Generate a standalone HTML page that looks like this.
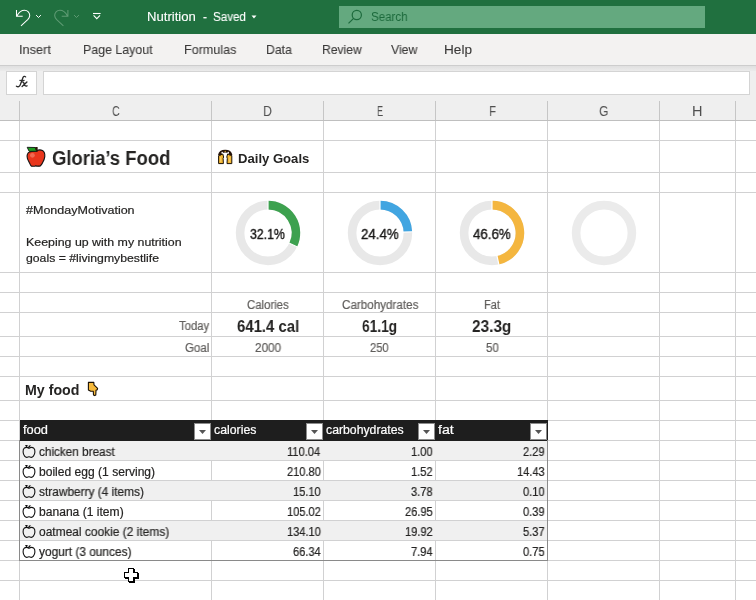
<!DOCTYPE html>
<html><head><meta charset="utf-8"><style>
html,body{margin:0;padding:0;width:756px;height:600px;overflow:hidden;background:#fff;}
body{position:relative;font-family:"Liberation Sans", sans-serif;}
</style></head><body>
<div style="position:absolute;left:0px;top:0px;width:756px;height:34px;background:#20703f;"></div><div style="position:absolute;left:0px;top:34px;width:756px;height:32px;background:#f3f2f1;"></div><div style="position:absolute;left:0px;top:65px;width:756px;height:1px;background:#cdcdcd;"></div><div style="position:absolute;left:0px;top:66px;width:756px;height:35px;background:#efefef;"></div><div style="position:absolute;left:0px;top:66px;width:756px;height:5px;background:#e6e6e6;background:linear-gradient(#e0e0e0,#ebebeb);"></div><div style="position:absolute;left:6px;top:71px;width:31px;height:24px;background:#ffffff;box-sizing:border-box;border:1px solid #d4d4d4;"></div><div style="position:absolute;left:43px;top:71px;width:707px;height:24px;background:#ffffff;box-sizing:border-box;border:1px solid #d4d4d4;"></div><div style="position:absolute;left:0px;top:101px;width:756px;height:19px;background:#efefef;"></div><div style="position:absolute;left:0px;top:120px;width:756px;height:1px;background:#bfbfbf;"></div><div style="position:absolute;left:19px;top:101px;width:1px;height:19px;background:#c6c6c6;"></div><div style="position:absolute;left:211px;top:101px;width:1px;height:19px;background:#c6c6c6;"></div><div style="position:absolute;left:323px;top:101px;width:1px;height:19px;background:#c6c6c6;"></div><div style="position:absolute;left:435px;top:101px;width:1px;height:19px;background:#c6c6c6;"></div><div style="position:absolute;left:547px;top:101px;width:1px;height:19px;background:#c6c6c6;"></div><div style="position:absolute;left:659px;top:101px;width:1px;height:19px;background:#c6c6c6;"></div><div style="position:absolute;left:735px;top:101px;width:1px;height:19px;background:#c6c6c6;"></div><div style="position:absolute;left:0px;top:121px;width:756px;height:479px;background:#ffffff;"></div><div style="position:absolute;left:0px;top:140px;width:756px;height:1px;background:#d1d1d2;"></div><div style="position:absolute;left:0px;top:172px;width:756px;height:1px;background:#d1d1d2;"></div><div style="position:absolute;left:0px;top:192px;width:756px;height:1px;background:#d1d1d2;"></div><div style="position:absolute;left:0px;top:272px;width:756px;height:1px;background:#d1d1d2;"></div><div style="position:absolute;left:0px;top:292px;width:756px;height:1px;background:#d1d1d2;"></div><div style="position:absolute;left:0px;top:312px;width:756px;height:1px;background:#d1d1d2;"></div><div style="position:absolute;left:0px;top:336px;width:756px;height:1px;background:#d1d1d2;"></div><div style="position:absolute;left:0px;top:356px;width:756px;height:1px;background:#d1d1d2;"></div><div style="position:absolute;left:0px;top:376px;width:756px;height:1px;background:#d1d1d2;"></div><div style="position:absolute;left:0px;top:400px;width:756px;height:1px;background:#d1d1d2;"></div><div style="position:absolute;left:0px;top:420px;width:756px;height:1px;background:#d1d1d2;"></div><div style="position:absolute;left:0px;top:440px;width:756px;height:1px;background:#d1d1d2;"></div><div style="position:absolute;left:0px;top:460px;width:756px;height:1px;background:#d1d1d2;"></div><div style="position:absolute;left:0px;top:480px;width:756px;height:1px;background:#d1d1d2;"></div><div style="position:absolute;left:0px;top:500px;width:756px;height:1px;background:#d1d1d2;"></div><div style="position:absolute;left:0px;top:520px;width:756px;height:1px;background:#d1d1d2;"></div><div style="position:absolute;left:0px;top:540px;width:756px;height:1px;background:#d1d1d2;"></div><div style="position:absolute;left:0px;top:560px;width:756px;height:1px;background:#d1d1d2;"></div><div style="position:absolute;left:0px;top:580px;width:756px;height:1px;background:#d1d1d2;"></div><div style="position:absolute;left:19px;top:121px;width:1px;height:479px;background:#d1d1d2;"></div><div style="position:absolute;left:211px;top:121px;width:1px;height:479px;background:#d1d1d2;"></div><div style="position:absolute;left:323px;top:121px;width:1px;height:479px;background:#d1d1d2;"></div><div style="position:absolute;left:435px;top:121px;width:1px;height:479px;background:#d1d1d2;"></div><div style="position:absolute;left:547px;top:121px;width:1px;height:479px;background:#d1d1d2;"></div><div style="position:absolute;left:659px;top:121px;width:1px;height:479px;background:#d1d1d2;"></div><div style="position:absolute;left:735px;top:121px;width:1px;height:479px;background:#d1d1d2;"></div><div style="position:absolute;left:20px;top:441px;width:527px;height:19px;background:#f0f0f0;"></div><div style="position:absolute;left:20px;top:481px;width:527px;height:19px;background:#f0f0f0;"></div><div style="position:absolute;left:20px;top:521px;width:527px;height:19px;background:#f0f0f0;"></div><div style="position:absolute;left:20px;top:420px;width:528px;height:21px;background:#1e1e1e;"></div><div style="position:absolute;left:19px;top:440px;width:1px;height:121px;background:#8a8a8a;"></div><div style="position:absolute;left:547px;top:440px;width:1px;height:121px;background:#8a8a8a;"></div><div style="position:absolute;left:19px;top:560px;width:529px;height:1px;background:#8a8a8a;"></div><div style="position:absolute;left:194px;top:423px;width:17px;height:17px;background:#ffffff;box-sizing:border-box;border:1px solid #8c8c8c;"></div><svg style="position:absolute;left:194px;top:423px" width="17" height="17"><polygon points="5,7 12,7 8.5,11" fill="#555"/></svg><div style="position:absolute;left:306px;top:423px;width:17px;height:17px;background:#ffffff;box-sizing:border-box;border:1px solid #8c8c8c;"></div><svg style="position:absolute;left:306px;top:423px" width="17" height="17"><polygon points="5,7 12,7 8.5,11" fill="#555"/></svg><div style="position:absolute;left:418px;top:423px;width:17px;height:17px;background:#ffffff;box-sizing:border-box;border:1px solid #8c8c8c;"></div><svg style="position:absolute;left:418px;top:423px" width="17" height="17"><polygon points="5,7 12,7 8.5,11" fill="#555"/></svg><div style="position:absolute;left:530px;top:423px;width:17px;height:17px;background:#ffffff;box-sizing:border-box;border:1px solid #8c8c8c;"></div><svg style="position:absolute;left:530px;top:423px" width="17" height="17"><polygon points="5,7 12,7 8.5,11" fill="#555"/></svg><svg style="position:absolute;left:250px;top:14px" width="8" height="6"><polygon points="1.5,1.5 6.5,1.5 4,4.5" fill="#ffffff"/></svg><div style="position:absolute;left:339px;top:6px;width:366px;height:22px;background:#64a97f;"></div><svg style="position:absolute;left:344px;top:6px" width="24" height="22"><circle cx="12.8" cy="9" r="4.6" fill="none" stroke="#1c6a3c" stroke-width="1.2"/><line x1="9.6" y1="12.3" x2="4.5" y2="17.4" stroke="#1c6a3c" stroke-width="1.2"/></svg><svg style="position:absolute;left:0px;top:0px" width="110" height="34"><path d="M16.5 10 V16.3 H22.7 M16.9 15.9 C19 12.2 21.9 10.3 24.5 10.3 C27.6 10.3 29.8 12.6 29.7 15.6 C29.6 17.2 28.9 18.4 27.7 19.6 L21 25.8" fill="none" stroke="#fff" stroke-width="1.05"/><path d="M36.1 15.1 L38.5 17.5 L40.9 15.1" fill="none" stroke="#fff" stroke-width="1"/><g transform="translate(84.4,0) scale(-1,1)"><path d="M16.5 10 V16.3 H22.7 M16.9 15.9 C19 12.2 21.9 10.3 24.5 10.3 C27.6 10.3 29.8 12.6 29.7 15.6 C29.6 17.2 28.9 18.4 27.7 19.6 L21 25.8" fill="none" stroke="#5f9b74" stroke-width="1.05"/></g><path d="M74.1 15.1 L76.5 17.5 L78.9 15.1" fill="none" stroke="#5f9b74" stroke-width="1"/><path d="M93 13.5 H100.6" stroke="#fff" stroke-width="1.1"/><path d="M93.6 15.4 L96.8 18.6 L100 15.4" fill="none" stroke="#fff" stroke-width="1.1"/></svg><svg style="position:absolute;left:0;top:55px" width="40" height="40" viewBox="0 0 40 40"><path d="M25.6 21.9 C24.8 21 23.4 21.3 23 22.6 L20.2 30 C19.5 31.8 18 32.2 16.4 31.2" fill="none" stroke="#2b2b2b" stroke-width="1.3" stroke-linecap="round"/><path d="M19.4 25.4 H24.6" stroke="#2b2b2b" stroke-width="1.1"/><path d="M21.8 27 C23 26.5 23.6 27.2 24.2 28.9 C24.8 30.7 25.5 31.6 27 30.8 M26.9 26.9 L22.1 31.5" fill="none" stroke="#2b2b2b" stroke-width="1.35" stroke-linecap="round"/></svg><svg style="position:absolute;left:232px;top:196.7px" width="72" height="72" viewBox="232 196.7 72 72"><circle cx="268" cy="232.7" r="27.900000000000002" fill="none" stroke="#e8e8e8" stroke-width="8.600000000000001"/><path d="M268.00 204.80 A27.900000000000002 27.900000000000002 0 0 1 293.17 244.74" fill="none" stroke="#3da14f" stroke-width="8.600000000000001"/><line x1="268.00" y1="210.10" x2="268.00" y2="199.50" stroke="#fff" stroke-width="1.2"/><line x1="288.39" y1="242.45" x2="297.95" y2="247.02" stroke="#fff" stroke-width="1.2"/></svg><svg style="position:absolute;left:344px;top:196.7px" width="72" height="72" viewBox="344 196.7 72 72"><circle cx="380" cy="232.7" r="27.900000000000002" fill="none" stroke="#e8e8e8" stroke-width="8.600000000000001"/><path d="M380.00 204.80 A27.900000000000002 27.900000000000002 0 0 1 407.88 231.65" fill="none" stroke="#41a5e1" stroke-width="8.600000000000001"/><line x1="380.00" y1="210.10" x2="380.00" y2="199.50" stroke="#fff" stroke-width="1.2"/><line x1="402.58" y1="231.85" x2="413.18" y2="231.45" stroke="#fff" stroke-width="1.2"/></svg><svg style="position:absolute;left:456px;top:196.7px" width="72" height="72" viewBox="456 196.7 72 72"><circle cx="492" cy="232.7" r="27.900000000000002" fill="none" stroke="#e8e8e8" stroke-width="8.600000000000001"/><path d="M492.00 204.80 A27.900000000000002 27.900000000000002 0 0 1 497.91 259.97" fill="none" stroke="#f4b63f" stroke-width="8.600000000000001"/><line x1="492.00" y1="210.10" x2="492.00" y2="199.50" stroke="#fff" stroke-width="1.2"/><line x1="496.79" y1="254.79" x2="499.04" y2="265.15" stroke="#fff" stroke-width="1.2"/></svg><svg style="position:absolute;left:568px;top:196.7px" width="72" height="72" viewBox="568 196.7 72 72"><circle cx="604" cy="232.7" r="27.900000000000002" fill="none" stroke="#ebebeb" stroke-width="8.600000000000001"/></svg><svg style="position:absolute;left:20px;top:442px" width="18" height="18" viewBox="0 0 18 18"><path d="M9 6.3 C10.2 5.5 12.2 5.2 13.6 6 C14.7 6.7 15 8.2 14.9 10 C14.8 11.7 14.3 13 13.4 14.1 C12.6 15.1 11.6 15.5 10.8 15.3 C10.1 15.1 9.6 14.7 9 14.7 C8.4 14.7 7.9 15.1 7.2 15.3 C6.4 15.5 5.4 15.1 4.6 14.1 C3.7 13 3.2 11.7 3.1 10 C3 8.2 3.3 6.7 4.4 6 C5.8 5.2 7.8 5.5 9 6.3 Z" fill="none" stroke="#111" stroke-width="1.1"/><path d="M5.3 3.6 H7.6 M6.6 3.6 V6 M8.3 5.8 L10.4 3.4 M8.7 3.9 L9.5 4.9" fill="none" stroke="#111" stroke-width="1.05"/></svg><svg style="position:absolute;left:20px;top:462px" width="18" height="18" viewBox="0 0 18 18"><path d="M9 6.3 C10.2 5.5 12.2 5.2 13.6 6 C14.7 6.7 15 8.2 14.9 10 C14.8 11.7 14.3 13 13.4 14.1 C12.6 15.1 11.6 15.5 10.8 15.3 C10.1 15.1 9.6 14.7 9 14.7 C8.4 14.7 7.9 15.1 7.2 15.3 C6.4 15.5 5.4 15.1 4.6 14.1 C3.7 13 3.2 11.7 3.1 10 C3 8.2 3.3 6.7 4.4 6 C5.8 5.2 7.8 5.5 9 6.3 Z" fill="none" stroke="#111" stroke-width="1.1"/><path d="M5.3 3.6 H7.6 M6.6 3.6 V6 M8.3 5.8 L10.4 3.4 M8.7 3.9 L9.5 4.9" fill="none" stroke="#111" stroke-width="1.05"/></svg><svg style="position:absolute;left:20px;top:482px" width="18" height="18" viewBox="0 0 18 18"><path d="M9 6.3 C10.2 5.5 12.2 5.2 13.6 6 C14.7 6.7 15 8.2 14.9 10 C14.8 11.7 14.3 13 13.4 14.1 C12.6 15.1 11.6 15.5 10.8 15.3 C10.1 15.1 9.6 14.7 9 14.7 C8.4 14.7 7.9 15.1 7.2 15.3 C6.4 15.5 5.4 15.1 4.6 14.1 C3.7 13 3.2 11.7 3.1 10 C3 8.2 3.3 6.7 4.4 6 C5.8 5.2 7.8 5.5 9 6.3 Z" fill="none" stroke="#111" stroke-width="1.1"/><path d="M5.3 3.6 H7.6 M6.6 3.6 V6 M8.3 5.8 L10.4 3.4 M8.7 3.9 L9.5 4.9" fill="none" stroke="#111" stroke-width="1.05"/></svg><svg style="position:absolute;left:20px;top:502px" width="18" height="18" viewBox="0 0 18 18"><path d="M9 6.3 C10.2 5.5 12.2 5.2 13.6 6 C14.7 6.7 15 8.2 14.9 10 C14.8 11.7 14.3 13 13.4 14.1 C12.6 15.1 11.6 15.5 10.8 15.3 C10.1 15.1 9.6 14.7 9 14.7 C8.4 14.7 7.9 15.1 7.2 15.3 C6.4 15.5 5.4 15.1 4.6 14.1 C3.7 13 3.2 11.7 3.1 10 C3 8.2 3.3 6.7 4.4 6 C5.8 5.2 7.8 5.5 9 6.3 Z" fill="none" stroke="#111" stroke-width="1.1"/><path d="M5.3 3.6 H7.6 M6.6 3.6 V6 M8.3 5.8 L10.4 3.4 M8.7 3.9 L9.5 4.9" fill="none" stroke="#111" stroke-width="1.05"/></svg><svg style="position:absolute;left:20px;top:522px" width="18" height="18" viewBox="0 0 18 18"><path d="M9 6.3 C10.2 5.5 12.2 5.2 13.6 6 C14.7 6.7 15 8.2 14.9 10 C14.8 11.7 14.3 13 13.4 14.1 C12.6 15.1 11.6 15.5 10.8 15.3 C10.1 15.1 9.6 14.7 9 14.7 C8.4 14.7 7.9 15.1 7.2 15.3 C6.4 15.5 5.4 15.1 4.6 14.1 C3.7 13 3.2 11.7 3.1 10 C3 8.2 3.3 6.7 4.4 6 C5.8 5.2 7.8 5.5 9 6.3 Z" fill="none" stroke="#111" stroke-width="1.1"/><path d="M5.3 3.6 H7.6 M6.6 3.6 V6 M8.3 5.8 L10.4 3.4 M8.7 3.9 L9.5 4.9" fill="none" stroke="#111" stroke-width="1.05"/></svg><svg style="position:absolute;left:20px;top:542px" width="18" height="18" viewBox="0 0 18 18"><path d="M9 6.3 C10.2 5.5 12.2 5.2 13.6 6 C14.7 6.7 15 8.2 14.9 10 C14.8 11.7 14.3 13 13.4 14.1 C12.6 15.1 11.6 15.5 10.8 15.3 C10.1 15.1 9.6 14.7 9 14.7 C8.4 14.7 7.9 15.1 7.2 15.3 C6.4 15.5 5.4 15.1 4.6 14.1 C3.7 13 3.2 11.7 3.1 10 C3 8.2 3.3 6.7 4.4 6 C5.8 5.2 7.8 5.5 9 6.3 Z" fill="none" stroke="#111" stroke-width="1.1"/><path d="M5.3 3.6 H7.6 M6.6 3.6 V6 M8.3 5.8 L10.4 3.4 M8.7 3.9 L9.5 4.9" fill="none" stroke="#111" stroke-width="1.05"/></svg><svg style="position:absolute;left:22px;top:144px" width="28" height="26" viewBox="0 0 28 26"><path d="M14.7 7.2 C16 6 18.5 5.6 20.4 6.5 C22.3 7.5 23 10 22.8 12.6 C22.5 15 21.5 17 20.8 18.2 C20 19.8 19 21.7 18.2 21.9 C17 22.3 15.5 22 14.7 22.2 C14.2 22 13.9 21.7 13.9 21.7 C13.5 22 13 22.1 13 22.1 C11.5 22.3 10 22.3 9.3 22.1 C8.5 21.5 8 20 7.6 19.1 C6.8 17.5 5.8 15.8 5.4 14.3 C5 12.5 5 11.5 5.2 10.8 C5.8 8.8 6.5 8.2 7.6 8 C9 7.3 12.5 7 14.7 7.2 Z" fill="#e8361c" stroke="#111" stroke-width="1.1"/><circle cx="10.4" cy="11.3" r="2.4" fill="#ef6a52"/><path d="M5.2 3.3 L13 3.5 L15 7.2 L7.2 7.4 Z" fill="#1f9e22" stroke="#111" stroke-width="0.9"/><path d="M13 3 L15.6 3 L15.8 7.6 L14.2 7.6 Z" fill="#2a1a0a"/></svg><svg style="position:absolute;left:214px;top:146px" width="24" height="22" viewBox="0 0 24 22"><path d="M4.6 9.6 L4.6 17.6 L9.4 17.6 L9.1 12.4 L9.6 11 L8.8 8 Z" fill="#f3b732" stroke="#1a1005" stroke-width="1" stroke-linejoin="round"/><path d="M17.8 9.6 L17.8 17.6 L13 17.6 L13.3 12.4 L12.8 11 L13.6 8 Z" fill="#f3b732" stroke="#1a1005" stroke-width="1" stroke-linejoin="round"/><path d="M5.4 9.2 C6 5.8 8.4 5.2 11.2 5.2 C14 5.2 16.4 5.8 17 9.2" fill="none" stroke="#24120a" stroke-width="2.8"/><circle cx="8.2" cy="6.6" r="0.8" fill="#fff"/><circle cx="14.2" cy="6.6" r="0.8" fill="#fff"/><circle cx="11.2" cy="5.4" r="0.6" fill="#f2b630"/><path d="M6.6 11 L6.8 16 M15.8 11 L15.6 16" stroke="#f8d27a" stroke-width="0.9"/></svg><svg style="position:absolute;left:84px;top:379px" width="18" height="20" viewBox="0 0 18 20"><path d="M4.4 3.4 L9.8 3.4 L10 5.8 L13.6 9.3 L13.3 10.7 L12 11.3 L11.8 16 L10.7 16.6 L9.5 16 L9.3 12.3 L6.7 12.3 L4.4 11 Z" fill="#f6b93a" stroke="#1a1005" stroke-width="1.1" stroke-linejoin="round"/></svg><svg style="position:absolute;left:120px;top:564px" width="24" height="24" viewBox="0 0 24 24" shape-rendering="crispEdges"><path d="M8.5 4.5 H13.5 V8.5 H17.5 V13.5 H13.5 V17.5 H8.5 V13.5 H4.5 V8.5 H8.5 Z" fill="none" stroke="#000" stroke-width="1" transform="translate(1,1)"/><path d="M8.5 4.5 H13.5 V8.5 H17.5 V13.5 H13.5 V17.5 H8.5 V13.5 H4.5 V8.5 H8.5 Z" fill="#fff" stroke="#000" stroke-width="1"/></svg><div style="position:absolute;left:147.41px;top:11.44px;font-size:12px;line-height:12px;font-weight:400;color:#ffffff;white-space:nowrap;will-change:transform;transform:scaleX(1.0930);transform-origin:0 0;-webkit-text-stroke:0.1px #ffffff;">Nutrition</div><div style="position:absolute;left:202.80px;top:11.44px;font-size:12px;line-height:12px;font-weight:400;color:#ffffff;white-space:nowrap;will-change:transform;transform:scaleX(0.9750);transform-origin:0 0;-webkit-text-stroke:0.1px #ffffff;">-</div><div style="position:absolute;left:213.03px;top:11.44px;font-size:12px;line-height:12px;font-weight:400;color:#ffffff;white-space:nowrap;will-change:transform;transform:scaleX(0.9688);transform-origin:0 0;-webkit-text-stroke:0.1px #ffffff;">Saved</div><div style="position:absolute;left:371.24px;top:10.94px;font-size:12px;line-height:12px;font-weight:400;color:#1c6a3c;white-space:nowrap;will-change:transform;transform:scaleX(0.9639);transform-origin:0 0;">Search</div><div style="position:absolute;left:19.32px;top:43.20px;font-size:13px;line-height:13px;font-weight:400;color:#3b3a39;white-space:nowrap;will-change:transform;transform:scaleX(0.9812);transform-origin:0 0;-webkit-text-stroke:0.1px #3b3a39;">Insert</div><div style="position:absolute;left:83.45px;top:43.20px;font-size:13px;line-height:13px;font-weight:400;color:#3b3a39;white-space:nowrap;will-change:transform;transform:scaleX(0.9514);transform-origin:0 0;-webkit-text-stroke:0.1px #3b3a39;">Page Layout</div><div style="position:absolute;left:183.93px;top:43.20px;font-size:13px;line-height:13px;font-weight:400;color:#3b3a39;white-space:nowrap;will-change:transform;transform:scaleX(0.9660);transform-origin:0 0;-webkit-text-stroke:0.1px #3b3a39;">Formulas</div><div style="position:absolute;left:265.66px;top:43.20px;font-size:13px;line-height:13px;font-weight:400;color:#3b3a39;white-space:nowrap;will-change:transform;transform:scaleX(0.9407);transform-origin:0 0;-webkit-text-stroke:0.1px #3b3a39;">Data</div><div style="position:absolute;left:321.57px;top:43.20px;font-size:13px;line-height:13px;font-weight:400;color:#3b3a39;white-space:nowrap;will-change:transform;transform:scaleX(0.9333);transform-origin:0 0;-webkit-text-stroke:0.1px #3b3a39;">Review</div><div style="position:absolute;left:390.90px;top:43.20px;font-size:13px;line-height:13px;font-weight:400;color:#3b3a39;white-space:nowrap;will-change:transform;transform:scaleX(0.9464);transform-origin:0 0;-webkit-text-stroke:0.1px #3b3a39;">View</div><div style="position:absolute;left:444.25px;top:43.20px;font-size:13px;line-height:13px;font-weight:400;color:#3b3a39;white-space:nowrap;will-change:transform;transform:scaleX(1.0480);transform-origin:0 0;-webkit-text-stroke:0.1px #3b3a39;">Help</div><div style="position:absolute;left:112.15px;top:104.15px;font-size:14px;line-height:14px;font-weight:400;color:#505050;white-space:nowrap;will-change:transform;transform:scaleX(0.7700);transform-origin:0 0;">C</div><div style="position:absolute;left:263.01px;top:104.15px;font-size:14px;line-height:14px;font-weight:400;color:#505050;white-space:nowrap;will-change:transform;transform:scaleX(0.8889);transform-origin:0 0;">D</div><div style="position:absolute;left:377.05px;top:104.15px;font-size:14px;line-height:14px;font-weight:400;color:#505050;white-space:nowrap;will-change:transform;transform:scaleX(0.6500);transform-origin:0 0;">E</div><div style="position:absolute;left:488.64px;top:104.15px;font-size:14px;line-height:14px;font-weight:400;color:#505050;white-space:nowrap;will-change:transform;transform:scaleX(0.8143);transform-origin:0 0;">F</div><div style="position:absolute;left:598.80px;top:104.15px;font-size:14px;line-height:14px;font-weight:400;color:#505050;white-space:nowrap;will-change:transform;transform:scaleX(0.8600);transform-origin:0 0;">G</div><div style="position:absolute;left:692.31px;top:104.15px;font-size:14px;line-height:14px;font-weight:400;color:#505050;white-space:nowrap;will-change:transform;transform:scaleX(1.0375);transform-origin:0 0;">H</div><div style="position:absolute;left:51.88px;top:148.07px;font-size:20px;line-height:20px;font-weight:700;color:#252423;white-space:nowrap;will-change:transform;transform:scaleX(0.9238);transform-origin:0 0;">Gloria’s Food</div><div style="position:absolute;left:237.59px;top:151.70px;font-size:13px;line-height:13px;font-weight:700;color:#252423;white-space:nowrap;will-change:transform;transform:scaleX(1.0072);transform-origin:0 0;">Daily Goals</div><div style="position:absolute;left:26.00px;top:204.87px;font-size:11.5px;line-height:11.5px;font-weight:400;color:#252423;white-space:nowrap;will-change:transform;transform:scaleX(1.0889);transform-origin:0 0;-webkit-text-stroke:0.2px #252423;">#MondayMotivation</div><div style="position:absolute;left:25.72px;top:236.87px;font-size:11.5px;line-height:11.5px;font-weight:400;color:#252423;white-space:nowrap;will-change:transform;transform:scaleX(1.0769);transform-origin:0 0;-webkit-text-stroke:0.2px #252423;">Keeping up with my nutrition</div><div style="position:absolute;left:26.40px;top:252.87px;font-size:11.5px;line-height:11.5px;font-weight:400;color:#252423;white-space:nowrap;will-change:transform;transform:scaleX(1.0640);transform-origin:0 0;-webkit-text-stroke:0.2px #252423;">goals = #livingmybestlife</div><div style="position:absolute;left:249.85px;top:227.33px;font-size:14.5px;line-height:14.5px;font-weight:400;color:#1b1a19;white-space:nowrap;will-change:transform;transform:scaleX(0.8463);transform-origin:0 0;-webkit-text-stroke:0.4px #1b1a19;">32.1%</div><div style="position:absolute;left:360.55px;top:227.33px;font-size:14.5px;line-height:14.5px;font-weight:400;color:#1b1a19;white-space:nowrap;will-change:transform;transform:scaleX(0.9146);transform-origin:0 0;-webkit-text-stroke:0.4px #1b1a19;">24.4%</div><div style="position:absolute;left:472.55px;top:227.33px;font-size:14.5px;line-height:14.5px;font-weight:400;color:#1b1a19;white-space:nowrap;will-change:transform;transform:scaleX(0.9146);transform-origin:0 0;-webkit-text-stroke:0.4px #1b1a19;">46.6%</div><div style="position:absolute;left:246.90px;top:299.44px;font-size:12px;line-height:12px;font-weight:400;color:#605e5c;white-space:nowrap;will-change:transform;transform:scaleX(0.9477);transform-origin:0 0;-webkit-text-stroke:0.2px #605e5c;">Calories</div><div style="position:absolute;left:341.65px;top:299.44px;font-size:12px;line-height:12px;font-weight:400;color:#605e5c;white-space:nowrap;will-change:transform;transform:scaleX(0.9709);transform-origin:0 0;-webkit-text-stroke:0.2px #605e5c;">Carbohydrates</div><div style="position:absolute;left:483.73px;top:299.44px;font-size:12px;line-height:12px;font-weight:400;color:#605e5c;white-space:nowrap;will-change:transform;transform:scaleX(0.9187);transform-origin:0 0;-webkit-text-stroke:0.2px #605e5c;">Fat</div><div style="position:absolute;left:178.60px;top:319.84px;font-size:12px;line-height:12px;font-weight:400;color:#605e5c;white-space:nowrap;will-change:transform;transform:scaleX(0.9437);transform-origin:0 0;-webkit-text-stroke:0.2px #605e5c;">Today</div><div style="position:absolute;left:236.65px;top:317.51px;font-size:17px;line-height:17px;font-weight:700;color:#252423;white-space:nowrap;will-change:transform;transform:scaleX(0.8771);transform-origin:0 0;">641.4 cal</div><div style="position:absolute;left:362.00px;top:317.51px;font-size:17px;line-height:17px;font-weight:700;color:#252423;white-space:nowrap;will-change:transform;transform:scaleX(0.8070);transform-origin:0 0;">61.1g</div><div style="position:absolute;left:472.20px;top:317.51px;font-size:17px;line-height:17px;font-weight:700;color:#252423;white-space:nowrap;will-change:transform;transform:scaleX(0.9047);transform-origin:0 0;">23.3g</div><div style="position:absolute;left:185.00px;top:341.74px;font-size:12px;line-height:12px;font-weight:400;color:#605e5c;white-space:nowrap;will-change:transform;transform:scaleX(0.9600);transform-origin:0 0;-webkit-text-stroke:0.2px #605e5c;">Goal</div><div style="position:absolute;left:254.80px;top:341.74px;font-size:12px;line-height:12px;font-weight:400;color:#605e5c;white-space:nowrap;will-change:transform;transform:scaleX(0.9769);transform-origin:0 0;-webkit-text-stroke:0.2px #605e5c;">2000</div><div style="position:absolute;left:370.30px;top:341.74px;font-size:12px;line-height:12px;font-weight:400;color:#605e5c;white-space:nowrap;will-change:transform;transform:scaleX(0.9300);transform-origin:0 0;-webkit-text-stroke:0.2px #605e5c;">250</div><div style="position:absolute;left:485.60px;top:341.74px;font-size:12px;line-height:12px;font-weight:400;color:#605e5c;white-space:nowrap;will-change:transform;transform:scaleX(0.9538);transform-origin:0 0;-webkit-text-stroke:0.2px #605e5c;">50</div><div style="position:absolute;left:25.49px;top:382.75px;font-size:14px;line-height:14px;font-weight:700;color:#252423;white-space:nowrap;will-change:transform;transform:scaleX(1.0135);transform-origin:0 0;">My food</div><div style="position:absolute;left:22.50px;top:423.59px;font-size:12px;line-height:12px;font-weight:400;color:#ffffff;white-space:nowrap;will-change:transform;transform:scaleX(1.0696);transform-origin:0 0;-webkit-text-stroke:0.2px #ffffff;">food</div><div style="position:absolute;left:214.30px;top:423.59px;font-size:12px;line-height:12px;font-weight:400;color:#ffffff;white-space:nowrap;will-change:transform;transform:scaleX(1.0244);transform-origin:0 0;-webkit-text-stroke:0.2px #ffffff;">calories</div><div style="position:absolute;left:326.20px;top:423.59px;font-size:12px;line-height:12px;font-weight:400;color:#ffffff;white-space:nowrap;will-change:transform;transform:scaleX(1.0211);transform-origin:0 0;-webkit-text-stroke:0.2px #ffffff;">carbohydrates</div><div style="position:absolute;left:438.00px;top:423.59px;font-size:12px;line-height:12px;font-weight:400;color:#ffffff;white-space:nowrap;will-change:transform;transform:scaleX(1.1769);transform-origin:0 0;-webkit-text-stroke:0.2px #ffffff;">fat</div><div style="position:absolute;left:38.60px;top:446.04px;font-size:12px;line-height:12px;font-weight:400;color:#252423;white-space:nowrap;will-change:transform;transform:scaleX(0.9792);transform-origin:0 0;-webkit-text-stroke:0.2px #252423;">chicken breast</div><div style="position:absolute;left:287.38px;top:446.04px;font-size:12px;line-height:12px;font-weight:400;color:#252423;white-space:nowrap;will-change:transform;transform:scaleX(0.9229);transform-origin:0 0;-webkit-text-stroke:0.2px #252423;">110.04</div><div style="position:absolute;left:411.17px;top:446.04px;font-size:12px;line-height:12px;font-weight:400;color:#252423;white-space:nowrap;will-change:transform;transform:scaleX(0.9229);transform-origin:0 0;-webkit-text-stroke:0.2px #252423;">1.00</div><div style="position:absolute;left:522.97px;top:446.04px;font-size:12px;line-height:12px;font-weight:400;color:#252423;white-space:nowrap;will-change:transform;transform:scaleX(0.9229);transform-origin:0 0;-webkit-text-stroke:0.2px #252423;">2.29</div><div style="position:absolute;left:38.60px;top:466.04px;font-size:12px;line-height:12px;font-weight:400;color:#252423;white-space:nowrap;will-change:transform;transform:scaleX(1.0061);transform-origin:0 0;-webkit-text-stroke:0.2px #252423;">boiled egg (1 serving)</div><div style="position:absolute;left:287.38px;top:466.04px;font-size:12px;line-height:12px;font-weight:400;color:#252423;white-space:nowrap;will-change:transform;transform:scaleX(0.9229);transform-origin:0 0;-webkit-text-stroke:0.2px #252423;">210.80</div><div style="position:absolute;left:411.17px;top:466.04px;font-size:12px;line-height:12px;font-weight:400;color:#252423;white-space:nowrap;will-change:transform;transform:scaleX(0.9229);transform-origin:0 0;-webkit-text-stroke:0.2px #252423;">1.52</div><div style="position:absolute;left:516.51px;top:466.04px;font-size:12px;line-height:12px;font-weight:400;color:#252423;white-space:nowrap;will-change:transform;transform:scaleX(0.9229);transform-origin:0 0;-webkit-text-stroke:0.2px #252423;">14.43</div><div style="position:absolute;left:38.60px;top:486.04px;font-size:12px;line-height:12px;font-weight:400;color:#252423;white-space:nowrap;will-change:transform;transform:scaleX(0.9905);transform-origin:0 0;-webkit-text-stroke:0.2px #252423;">strawberry (4 items)</div><div style="position:absolute;left:292.91px;top:486.04px;font-size:12px;line-height:12px;font-weight:400;color:#252423;white-space:nowrap;will-change:transform;transform:scaleX(0.9229);transform-origin:0 0;-webkit-text-stroke:0.2px #252423;">15.10</div><div style="position:absolute;left:411.17px;top:486.04px;font-size:12px;line-height:12px;font-weight:400;color:#252423;white-space:nowrap;will-change:transform;transform:scaleX(0.9229);transform-origin:0 0;-webkit-text-stroke:0.2px #252423;">3.78</div><div style="position:absolute;left:522.97px;top:486.04px;font-size:12px;line-height:12px;font-weight:400;color:#252423;white-space:nowrap;will-change:transform;transform:scaleX(0.9229);transform-origin:0 0;-webkit-text-stroke:0.2px #252423;">0.10</div><div style="position:absolute;left:38.60px;top:506.04px;font-size:12px;line-height:12px;font-weight:400;color:#252423;white-space:nowrap;will-change:transform;transform:scaleX(1.0073);transform-origin:0 0;-webkit-text-stroke:0.2px #252423;">banana (1 item)</div><div style="position:absolute;left:287.38px;top:506.04px;font-size:12px;line-height:12px;font-weight:400;color:#252423;white-space:nowrap;will-change:transform;transform:scaleX(0.9229);transform-origin:0 0;-webkit-text-stroke:0.2px #252423;">105.02</div><div style="position:absolute;left:404.71px;top:506.04px;font-size:12px;line-height:12px;font-weight:400;color:#252423;white-space:nowrap;will-change:transform;transform:scaleX(0.9229);transform-origin:0 0;-webkit-text-stroke:0.2px #252423;">26.95</div><div style="position:absolute;left:522.97px;top:506.04px;font-size:12px;line-height:12px;font-weight:400;color:#252423;white-space:nowrap;will-change:transform;transform:scaleX(0.9229);transform-origin:0 0;-webkit-text-stroke:0.2px #252423;">0.39</div><div style="position:absolute;left:38.60px;top:526.04px;font-size:12px;line-height:12px;font-weight:400;color:#252423;white-space:nowrap;will-change:transform;transform:scaleX(0.9962);transform-origin:0 0;-webkit-text-stroke:0.2px #252423;">oatmeal cookie (2 items)</div><div style="position:absolute;left:287.38px;top:526.04px;font-size:12px;line-height:12px;font-weight:400;color:#252423;white-space:nowrap;will-change:transform;transform:scaleX(0.9229);transform-origin:0 0;-webkit-text-stroke:0.2px #252423;">134.10</div><div style="position:absolute;left:404.71px;top:526.04px;font-size:12px;line-height:12px;font-weight:400;color:#252423;white-space:nowrap;will-change:transform;transform:scaleX(0.9229);transform-origin:0 0;-webkit-text-stroke:0.2px #252423;">19.92</div><div style="position:absolute;left:522.97px;top:526.04px;font-size:12px;line-height:12px;font-weight:400;color:#252423;white-space:nowrap;will-change:transform;transform:scaleX(0.9229);transform-origin:0 0;-webkit-text-stroke:0.2px #252423;">5.37</div><div style="position:absolute;left:38.60px;top:546.04px;font-size:12px;line-height:12px;font-weight:400;color:#252423;white-space:nowrap;will-change:transform;transform:scaleX(0.9903);transform-origin:0 0;-webkit-text-stroke:0.2px #252423;">yogurt (3 ounces)</div><div style="position:absolute;left:292.91px;top:546.04px;font-size:12px;line-height:12px;font-weight:400;color:#252423;white-space:nowrap;will-change:transform;transform:scaleX(0.9229);transform-origin:0 0;-webkit-text-stroke:0.2px #252423;">66.34</div><div style="position:absolute;left:411.17px;top:546.04px;font-size:12px;line-height:12px;font-weight:400;color:#252423;white-space:nowrap;will-change:transform;transform:scaleX(0.9229);transform-origin:0 0;-webkit-text-stroke:0.2px #252423;">7.94</div><div style="position:absolute;left:522.97px;top:546.04px;font-size:12px;line-height:12px;font-weight:400;color:#252423;white-space:nowrap;will-change:transform;transform:scaleX(0.9229);transform-origin:0 0;-webkit-text-stroke:0.2px #252423;">0.75</div>
</body></html>
